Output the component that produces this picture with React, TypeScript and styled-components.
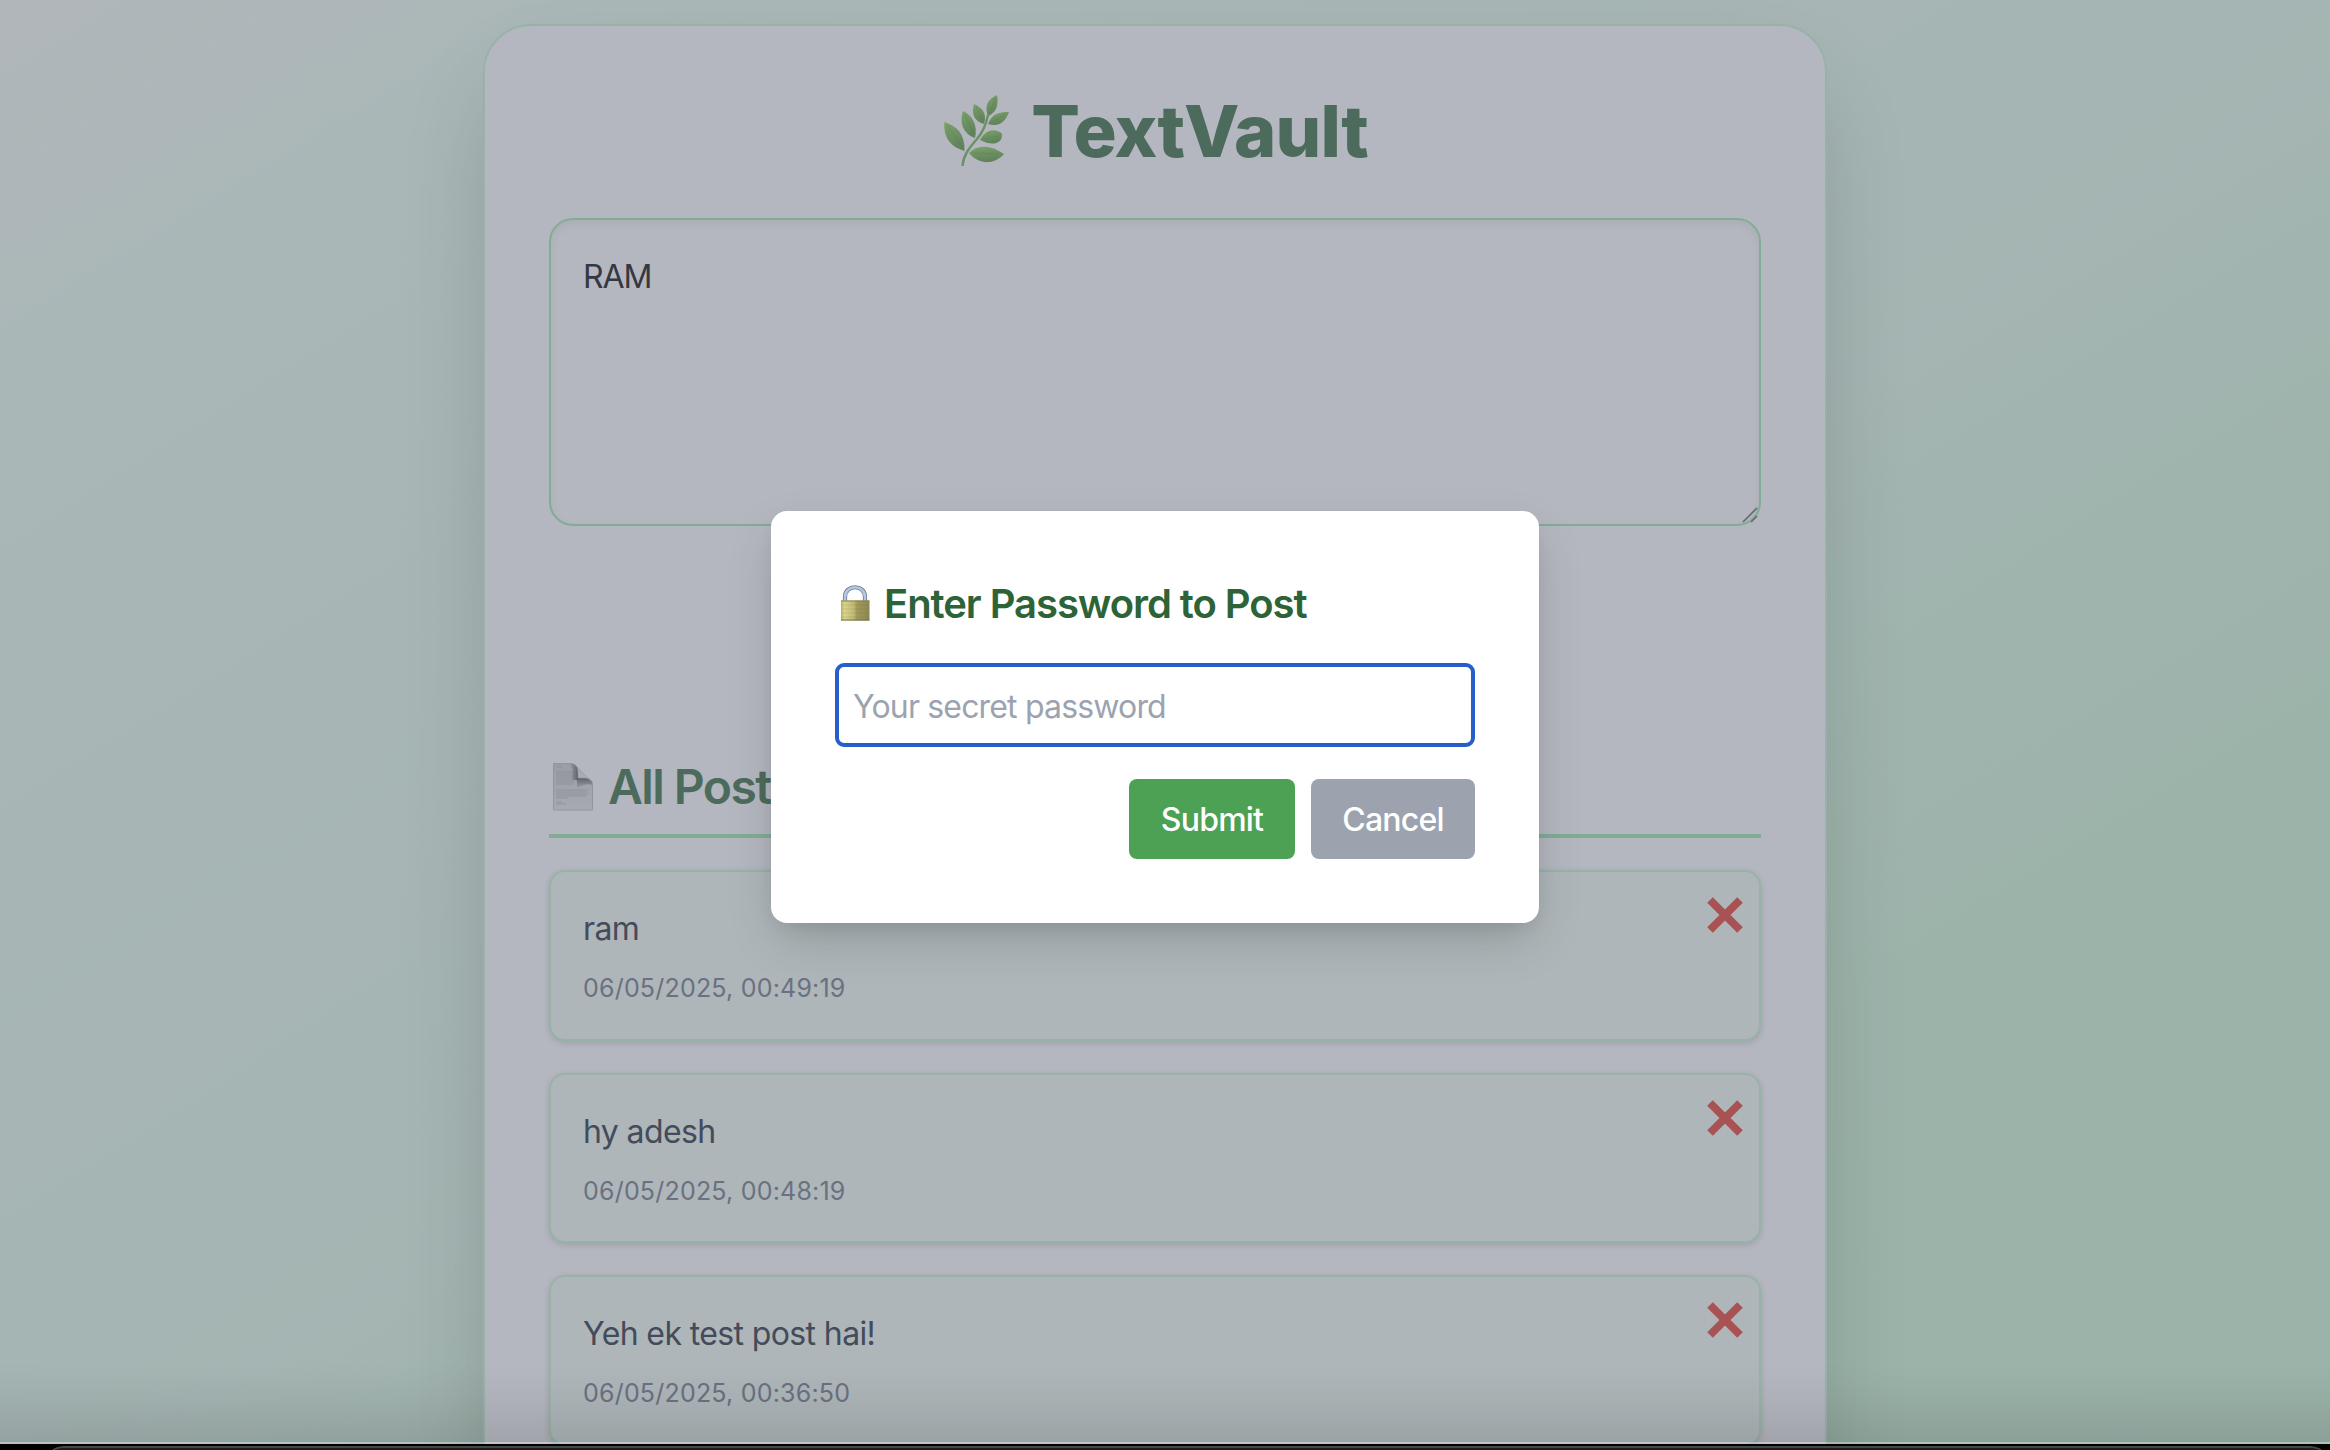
import React from 'react';
import styled, { createGlobalStyle } from 'styled-components';

const Global = createGlobalStyle`
  * { box-sizing: border-box; }
  body { margin: 0; overflow: hidden; background: #151515; font-family: Inter, "Liberation Sans", sans-serif; }
  h1, h2, h3, p { margin: 0; }
  button, input, textarea { font: inherit; }
`;

const Frame = styled.div`
  position: relative;
  width: 2330px;
  height: 1450px;
  overflow: hidden;
  background: #151515;
`;

const Page = styled.main`
  height: 1444px;
  padding: 24px 20px 0 0;
  overflow: hidden;
  display: flex;
  justify-content: center;
  align-items: flex-start;
  background: linear-gradient(to bottom right, #b1b6ba 0%, #a9b7b7 14%, #a5b5b3 50%, #9cb3aa 75%, #9bb3a9 100%);
`;

const Panel = styled.section`
  width: 1344px;
  height: 1700px;
  padding: 64px;
  border: 2px solid #97b3a8;
  border-radius: 48px;
  background: #b4b7bf;
  box-shadow: 0 50px 100px -24px rgba(0, 0, 0, 0.22);
`;

const Title = styled.h1`
  display: flex;
  justify-content: center;
  align-items: center;
  gap: 21px;
  height: 80px;
  margin-bottom: 48px;
  padding: 2px 0 0 2px;
  color: #4d6b5c;
  font-size: 72px;
  font-weight: 800;
  line-height: 80px;
  letter-spacing: -0.8px;
`;

const TextBox = styled.div`
  display: flex;
  align-items: flex-end;
  justify-content: space-between;
  height: 308px;
  padding: 33px 0 0 32px;
  border: 2px solid #82ac95;
  border-radius: 24px;
  box-shadow: inset 0 4px 8px rgba(0, 0, 0, 0.05);
`;

const BoxText = styled.p`
  align-self: flex-start;
  color: #353842;
  font-size: 32px;
  line-height: 48px;
  letter-spacing: -1.1px;
`;

const ListTitle = styled.h2`
  display: flex;
  align-items: center;
  gap: 15px;
  height: 84px;
  margin: 228px 0 32px;
  padding: 0 0 15px 4px;
  border-bottom: 4px solid #82ac95;
  color: #4d6b5c;
  font-size: 48px;
  font-weight: 600;
  line-height: 64px;
  letter-spacing: -1.6px;
`;

const List = styled.div`
  display: flex;
  flex-direction: column;
  gap: 32px;
`;

const Card = styled.article`
  display: flex;
  justify-content: space-between;
  height: 170.5px;
  padding: 31px 16px 0 32px;
  border: 2px solid #97b3a8;
  border-radius: 16px;
  background: #aeb6b9;
  box-shadow: 0 2px 6px rgba(0, 0, 0, 0.13);
`;

const Body = styled.p`
  color: #444b5a;
  font-size: 32px;
  line-height: 52px;
  letter-spacing: -0.62px;
`;

const Stamp = styled.p`
  margin-top: 13px;
  color: #6a7181;
  font-size: 25px;
  line-height: 40px;
  letter-spacing: 0.2px;
`;

const Cross = styled.svg`
  margin-top: -6px;
`;

const Overlay = styled.div`
  position: absolute;
  inset: 0 20px 16px 0;
  display: flex;
  align-items: center;
  justify-content: center;
`;

const Modal = styled.div`
  width: 768px;
  height: 412px;
  padding: 64px;
  border-radius: 16px;
  background: #fff;
  box-shadow: 0 20px 50px -6px rgba(0, 0, 0, 0.17), 0 8px 20px -8px rgba(0, 0, 0, 0.12);
`;

const ModalTitle = styled.h3`
  display: flex;
  align-items: center;
  gap: 14px;
  height: 56px;
  margin-bottom: 32px;
  padding: 1px 0 0 5px;
  color: #2d6337;
  font-size: 40px;
  font-weight: 600;
  line-height: 56px;
  letter-spacing: -1.06px;
`;

const LockSlot = styled.span`
  display: flex;
  margin-top: -1px;
`;

const Password = styled.input`
  display: block;
  width: 100%;
  height: 84px;
  padding: 2px 14px 0;
  border: 4px solid #265fca;
  border-radius: 9px;
  outline: none;
  background: #fff;
  font-size: 32px;
  letter-spacing: -0.83px;
  &::placeholder { color: #9ca3af; opacity: 1; }
`;

const Actions = styled.div`
  display: flex;
  justify-content: flex-end;
  gap: 16px;
  margin-top: 32px;
`;

const Button = styled.button<{ $tone: string; $width: number }>`
  width: ${(p) => p.$width}px;
  height: 80px;
  padding: 0;
  border: 0;
  border-radius: 8px;
  background: ${(p) => p.$tone};
  color: #fff;
  font-size: 32px;
  font-weight: 450;
  letter-spacing: -0.8px;
`;

const BottomShade = styled.div`
  position: absolute;
  left: 0;
  right: 0;
  bottom: 6px;
  height: 80px;
  background: linear-gradient(to bottom, rgba(0, 0, 0, 0), rgba(0, 0, 0, 0.03) 40%, rgba(0, 0, 0, 0.1));
  border-bottom: 2px solid rgba(255, 255, 255, 0.2);
`;

const WindowEdge = styled.div`
  position: absolute;
  inset: auto 0 0 0;
  height: 6px;
  padding: 2px 0 0 44px;
  background: #000;
  &::before {
    content: '';
    display: block;
    height: 24px;
    border-top: 2px solid #474747;
    border-radius: 20px 20px 0 0;
    background: #1d1d1d;
  }
`;

const Herb = () => (
  <svg width="66" height="72" viewBox="0 0 66 72">
    <defs>
      <linearGradient id="leaf" x1="0" y1="0" x2="0.3" y2="1">
        <stop offset="0" stopColor="#7ba267" />
        <stop offset="1" stopColor="#60825c" />
      </linearGradient>
    </defs>
    <path d="M18.500 71C19 61 25 53 33 44C39 37 42 30 44 20" fill="none" stroke="#6d9063" strokeWidth="2.4" />
    <g fill="url(#leaf)">
      <path d="M0.500 27C13 31 21 39 20.500 56C6 52-1 42 0.500 27Z" />
      <path d="M19 16C28 20 34 30 31 43C19 39 15 28 19 16Z" />
      <path d="M30 9C39 13 43 19 40 29C30 26 27 19 30 9Z" />
      <path d="M53 0C55 10 52 18 44 21C40 11 44 4 53 0Z" />
      <path d="M65 17C61 28 54 32 44 29C48 19 54 17 65 17Z" />
      <path d="M36 45C42 34 52 33 58 39C59 48 49 52 36 45Z" />
      <path d="M25 58C34 49 47 50 60 59C49 71 34 69 25 58Z" />
    </g>
    <path d="M4 31L18 52M21 20L30 40M32 12L39 27M52 3L45 18M61 19L47 28M55 41L39 44M55 59L29 58" stroke="#54744f" strokeOpacity=".3" fill="none" />
  </svg>
);

const PageIcon = () => (
  <svg width="40" height="48" viewBox="0 0 40 48">
    <defs>
      <linearGradient id="sheet" x1="0" y1="0" x2="0" y2="1">
        <stop offset="0" stopColor="#9a9da4" />
        <stop offset="1" stopColor="#a7aab1" />
      </linearGradient>
      <linearGradient id="foldSide" x1="0" y1="0" x2="1" y2="0">
        <stop offset="0" stopColor="#6a6d74" stopOpacity="0" />
        <stop offset="1" stopColor="#5c5f66" />
      </linearGradient>
      <linearGradient id="foldBase" x1="0" y1="0" x2="0" y2="1">
        <stop offset="0" stopColor="#5c5f66" />
        <stop offset="1" stopColor="#6a6d74" stopOpacity="0" />
      </linearGradient>
    </defs>
    <path d="M.5 .5H18C23 1 25 4 25 9V15H32C36 15 39.500 17 39.500 22V47H.5Z" fill="url(#sheet)" stroke="#93969d" />
    <path d="M4 4H9M3 9H21M3 11H22M3 13H21M3 15H22M3 17H21M3 19H22M3 21H20M3 27H35M3 29H34M3 31H35M3 33H33M3 35H15M3 39H9M3 41H13" stroke="#8b8e95" strokeWidth=".7" />
    <path d="M16 .5C23 1 25 4 25 9V17H19C20 10 20 5 16 .5Z" fill="url(#foldSide)" />
    <path d="M24 15H32C36 15 39.500 17 39.500 22C34 20 29 22 24 26Z" fill="url(#foldBase)" />
    <path d="M21 1L39 19C36 15.500 34 15 31 15H25V9C25 5 24 3 21 1Z" fill="#a9acb3" stroke="#92959c" strokeWidth=".6" />
  </svg>
);

const Lock = () => (
  <svg width="30" height="36" viewBox="0 0 30 36">
    <defs>
      <linearGradient id="brass">
        <stop offset="0" stopColor="#b9b267" />
        <stop offset=".12" stopColor="#d9d58d" />
        <stop offset=".45" stopColor="#c0b974" />
        <stop offset=".55" stopColor="#a19a5c" />
        <stop offset="1" stopColor="#8d8654" />
      </linearGradient>
    </defs>
    <path d="M5 17V12C5 -1 25 -1 25 12V17" fill="none" stroke="#66758f" strokeWidth="4.200" />
    <path d="M5 17V12C5 -1 25 -1 25 12V17" fill="none" stroke="#b4c9e4" strokeWidth="2.600" />
    <rect x="1" y="15.500" width="28.500" height="20" rx=".6" fill="url(#brass)" />
    <path d="M1 16H29.500" stroke="#8b8149" />
    <path d="M1 20H29M1 24H29M1 28H29M1 32H29" stroke="#76703f" strokeOpacity=".18" />
    <path d="M1 35H29.500" stroke="#766d42" />
  </svg>
);

const Delete = () => (
  <Cross width="36" height="36" viewBox="0 0 36 36">
    <path d="M3 3L33 33M33 3L3 33" stroke="#a85253" strokeWidth="7.900" />
  </Cross>
);

const Grip = () => (
  <svg width="20" height="20" viewBox="0 0 20 20">
    <path d="M4 18L18 4M12 18L18 12" stroke="#666a70" strokeWidth="1.700" />
  </svg>
);

const posts = [
  { text: 'ram', date: '06/05/2025, 00:49:19' },
  { text: 'hy adesh', date: '06/05/2025, 00:48:19' },
  { text: 'Yeh ek test post hai!', date: '06/05/2025, 00:36:50' },
];

export default function App() {
  return (
    <Frame>
      <Global />
      <Page>
        <Panel>
          <Title><Herb /><span>TextVault</span></Title>
          <TextBox><BoxText>RAM</BoxText><Grip /></TextBox>
          <ListTitle><PageIcon /><span>All Posts</span></ListTitle>
          <List>
            {posts.map((p) => (
              <Card key={p.date}>
                <div>
                  <Body>{p.text}</Body>
                  <Stamp>{p.date}</Stamp>
                </div>
                <Delete />
              </Card>
            ))}
          </List>
        </Panel>
      </Page>
      <Overlay>
        <Modal>
          <ModalTitle><LockSlot><Lock /></LockSlot><span>Enter Password to Post</span></ModalTitle>
          <Password type="password" placeholder="Your secret password" />
          <Actions>
            <Button $tone="#4ca154" $width={166}>Submit</Button>
            <Button $tone="#9ca3af" $width={164}>Cancel</Button>
          </Actions>
        </Modal>
      </Overlay>
      <BottomShade />
      <WindowEdge />
    </Frame>
  );
}
